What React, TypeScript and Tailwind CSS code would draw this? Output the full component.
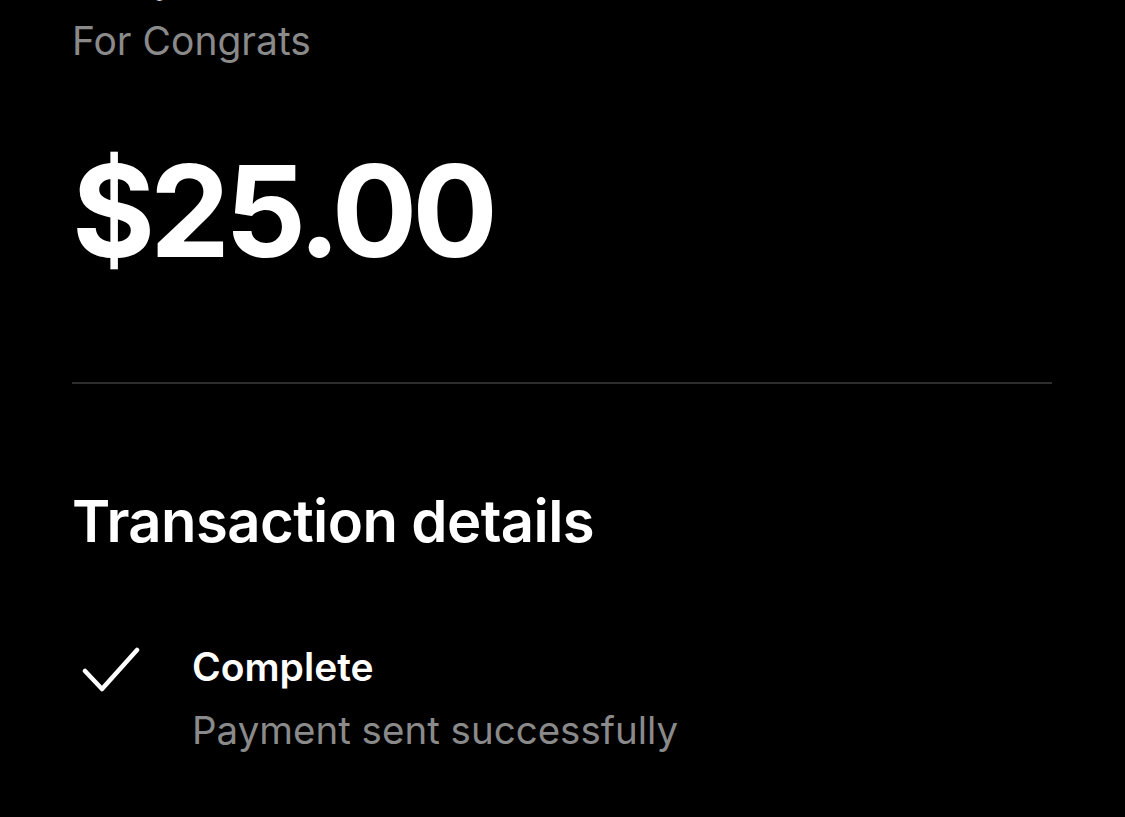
import React from "react";

export default function App() {
  return (
    <div className="w-[1125px] h-[817px] overflow-hidden bg-black text-white" style={{ fontFamily: "Inter, 'Noto Sans', sans-serif" }}>
      <div className="pl-[72px] pr-[73px]">
        <div className="-mt-[44px] h-[44px] text-[40px] leading-[44px] font-medium text-white whitespace-nowrap">
          <span className="inline-block w-[82px]" />
          <span>y</span>
        </div>
        <div className="mt-[17px] text-[39px] leading-[48px] text-[#8a8a8a]">For Congrats</div>
        <div className="mt-[76px] text-[127px] leading-[140px] font-bold tracking-[-0.04em]">$25.00</div>
        <div className="mt-[101px] h-[2px] bg-[#2e2e2e]" />
        <div className="mt-[102px] text-[58px] leading-[70px] font-semibold tracking-[-0.01em]">Transaction details</div>
        <div className="mt-[84px] flex">
          <div className="w-[120px] pt-[6px] pl-[10px]">
            <svg width="58" height="48" viewBox="0 0 58 48" fill="none">
              <path d="M3 25 L20 43 L55 4" stroke="white" strokeWidth="4.5" strokeLinecap="round" strokeLinejoin="round" />
            </svg>
          </div>
          <div className="pt-[3px]">
            <div className="text-[39px] leading-[48px] font-semibold">Complete</div>
            <div className="mt-[15px] text-[38.5px] leading-[48px] text-[#8a8a8a]">Payment sent successfully</div>
          </div>
        </div>
      </div>
    </div>
  );
}
